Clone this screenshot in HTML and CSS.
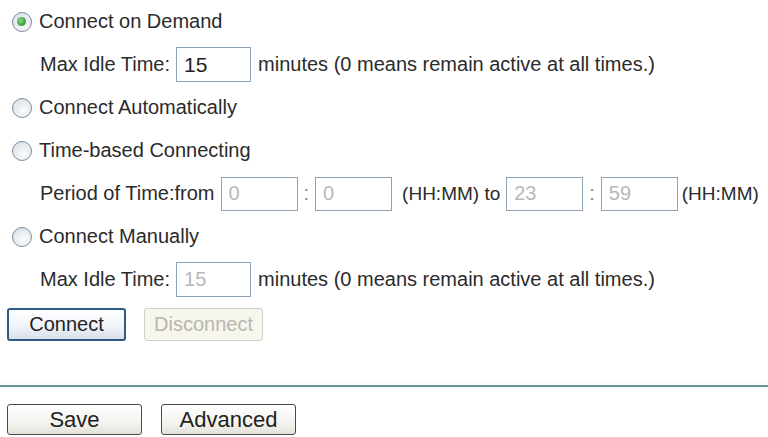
FILE: index.html
```html
<!DOCTYPE html>
<html lang="en">
<head>
    <meta charset="UTF-8">
    <meta name="viewport" content="width=device-width, initial-scale=1.0">
    <title>WAN Connection Mode</title>
    <link rel="stylesheet" href="styles.css">
</head>
<body>
    <div class="wan-form">
        <div class="row">
            <input type="radio" name="mode" id="modeDemand" class="radio" checked>
            <label for="modeDemand">Connect on Demand</label>
        </div>
        <div class="row sub">
            <span class="lbl">Max Idle Time:</span>
            <input type="text" class="field" value="15">
            <span class="note">minutes (0 means remain active at all times.)</span>
        </div>

        <div class="row">
            <input type="radio" name="mode" id="modeAuto" class="radio">
            <label for="modeAuto">Connect Automatically</label>
        </div>

        <div class="row">
            <input type="radio" name="mode" id="modeTime" class="radio">
            <label for="modeTime">Time-based Connecting</label>
        </div>
        <div class="row sub">
            <span class="lbl">Period of Time:from</span>
            <input type="text" class="field field-time" value="0" disabled>
            <span class="colon">:</span>
            <input type="text" class="field field-time" value="0" disabled>
            <span class="hint hint-to">(HH:MM) to</span>
            <input type="text" class="field field-time" value="23" disabled>
            <span class="colon">:</span>
            <input type="text" class="field field-time" value="59" disabled>
            <span class="hint hint-end">(HH:MM)</span>
        </div>

        <div class="row">
            <input type="radio" name="mode" id="modeManual" class="radio">
            <label for="modeManual">Connect Manually</label>
        </div>
        <div class="row sub">
            <span class="lbl">Max Idle Time:</span>
            <input type="text" class="field" value="15" disabled>
            <span class="note">minutes (0 means remain active at all times.)</span>
        </div>

        <div class="row btn-row">
            <button class="btn btn-default">Connect</button>
            <button class="btn" disabled>Disconnect</button>
        </div>
    </div>

    <div class="divider"></div>

    <div class="actions">
        <button class="btn btn-wide">Save</button>
        <button class="btn btn-wide">Advanced</button>
    </div>
</body>
</html>
```

FILE: styles.css
```css
body {
    margin: 0;
    background: #ffffff;
    font-family: "Liberation Sans", Arial, sans-serif;
    font-size: 20px;
    color: #2b2b2b;
}
.wan-form {
    display: flex;
    flex-direction: column;
}
.row {
    display: flex;
    align-items: center;
    height: 43px;
    white-space: nowrap;
}
.row label {
    margin-left: 7px;
}
.row.sub {
    padding-left: 40px;
}
.radio {
    appearance: none;
    -webkit-appearance: none;
    margin: 0 0 0 12px;
    width: 20px;
    height: 20px;
    border: 1.5px solid #7f8e9c;
    border-radius: 50%;
    background: radial-gradient(circle at 60% 65%, #fbfcfd 0%, #e4e9ee 60%, #c9d2db 100%);
    box-sizing: border-box;
    position: relative;
}
.radio:checked::after {
    content: "";
    position: absolute;
    left: 4px;
    top: 4px;
    width: 9px;
    height: 9px;
    border-radius: 50%;
    background: radial-gradient(circle at 40% 40%, #8fdc8f 0%, #3ea13e 60%, #2b7f2b 100%);
}
.lbl {
    margin-right: 6px;
}
.field {
    width: 75px;
    height: 35px;
    box-sizing: border-box;
    border: 1px solid #8ea3b5;
    padding: 0 7px;
    font-family: inherit;
    font-size: 21px;
    color: #222;
    background: #fff;
}
.field:disabled {
    font-size: 20px;
    color: #b8b8b8;
    background: #fff;
}
.field-time {
    width: 77px;
    height: 34px;
}
.note {
    margin-left: 7px;
}
.colon {
    margin: 0 6px;
    color: #888;
}
.hint {
    font-size: 19px;
}
.hint-to {
    margin: 0 6px 0 10px;
}
.hint-end {
    margin-left: 4px;
}
.btn-row {
    margin-top: 2px;
    gap: 18px;
    padding-left: 7px;
}
.btn {
    height: 33px;
    width: 119px;
    font-family: inherit;
    font-size: 20px;
    color: #222;
    border: 1px solid #3a3a3a;
    border-radius: 3px;
    background: linear-gradient(#ffffff, #f1f1ec 70%, #e1e0d8);
    padding: 0;
}
.btn-default {
    border: 2px solid #2d5a86;
    background: linear-gradient(#ffffff, #eef2f7 60%, #d8e0ea);
}
.btn:disabled {
    color: #b9b7ad;
    border-color: #d2d0c4;
    background: #f6f5ee;
}
.divider {
    margin-top: 39px;
    height: 2px;
    background: #66929c;
    box-shadow: 0 -2px 3px #eef7fa;
}
.actions {
    display: flex;
    gap: 19px;
    padding-left: 7px;
    margin-top: 17px;
}
.btn-wide {
    width: 135px;
    height: 31px;
    font-size: 22px;
    border: 1.5px solid #4a4a4a;
}
```
